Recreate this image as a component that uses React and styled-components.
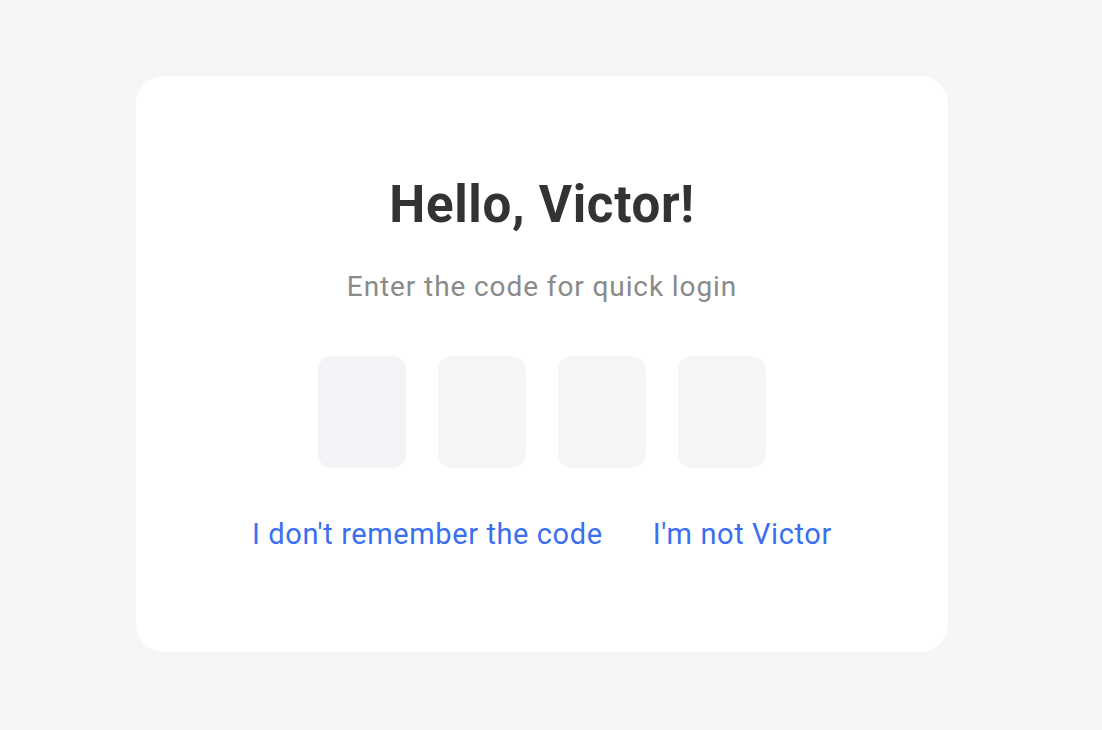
import React from "react";
import styled, { createGlobalStyle } from "styled-components";

const GlobalStyle = createGlobalStyle`
  html, body {
    margin: 0;
    padding: 0;
    background: #f5f6f8;
    font-family: Roboto, "Liberation Sans", sans-serif;
  }
`;

export default function App() {
  return (
    <>
      <GlobalStyle />
      <Page>
        <Card>
          <Title>Hello, Victor!</Title>
          <SubTitle>Enter the code for quick login</SubTitle>
          <CodeRow>
            {[0, 1, 2, 3].map((i) => (
              <CodeCell key={i} $active={i === 0} />
            ))}
          </CodeRow>
          <Links>
            <LinkButton href="#">I don't remember the code</LinkButton>
            <LinkButton href="#">I'm not Victor</LinkButton>
          </Links>
        </Card>
      </Page>
    </>
  );
}

const Page = styled.main`
  padding: 76px 0 0 136px;
  height: 730px;
  box-sizing: border-box;
`;

const Card = styled.section`
  width: 812px;
  height: 576px;
  box-sizing: border-box;
  padding-top: 99px;
  background: #ffffff;
  border-radius: 28px;
  display: flex;
  flex-direction: column;
  align-items: center;
`;

const Title = styled.h1`
  margin: 0;
  font-size: 51px;
  line-height: 60px;
  font-weight: 700;
  letter-spacing: 0.7px;
  color: #333333;
`;

const SubTitle = styled.p`
  margin: 35px 0 0;
  font-size: 28px;
  line-height: 34px;
  letter-spacing: 0.9px;
  color: #8a8a8a;
`;

const CodeRow = styled.div`
  display: flex;
  gap: 32px;
  margin-top: 52px;
`;

const CodeCell = styled.div`
  width: 88px;
  height: 112px;
  border-radius: 14px;
  background: ${(props) => (props.$active ? "#f2f3f6" : "#f5f6f8")};
`;

const Links = styled.nav`
  display: flex;
  gap: 50px;
  margin-top: 48px;
`;

const LinkButton = styled.a`
  font-size: 29px;
  line-height: 36px;
  letter-spacing: 0.6px;
  color: #3a6ff0;
  text-decoration: none;
`;
